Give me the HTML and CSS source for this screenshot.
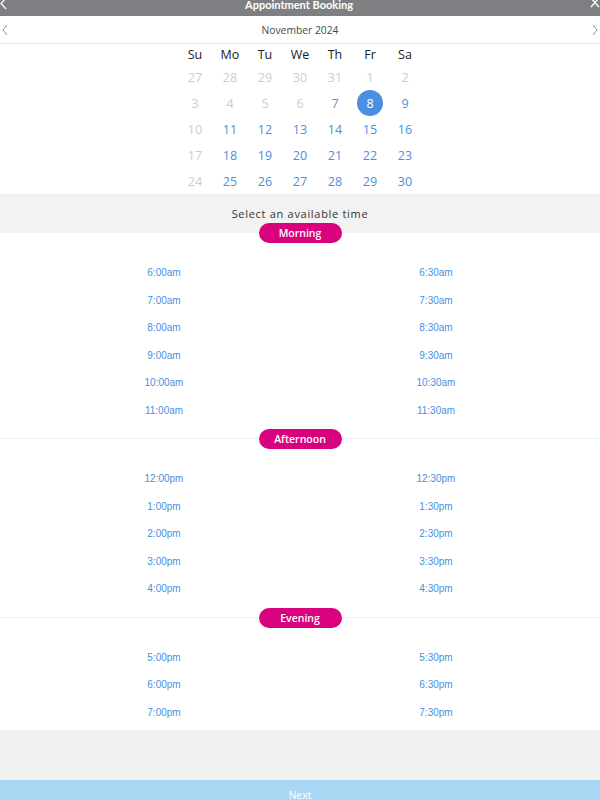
FILE: index.html
```html
<!DOCTYPE html>
<html>
<head>
<meta charset="utf-8">
<link rel="stylesheet" href="styles.css">
</head>
<body>
<div class="page">
  <header class="topbar">
    <svg class="tb-back" width="8" height="10" viewBox="0 0 8 10"><path d="M6 -2 L1 3.5 L6 9" fill="none" stroke="#fff" stroke-width="1.2"/></svg>
    <div class="tb-title">Appointment Booking</div>
    <svg class="tb-close" width="10" height="10" viewBox="0 0 10 10"><path d="M1 -2 L9 7 M9 -2 L1 7" fill="none" stroke="#fff" stroke-width="1.3"/></svg>
  </header>

  <div class="monthbar">
    <svg class="chev" width="8" height="12" viewBox="0 0 8 12"><path d="M6 1 L2 6 L6 11" fill="none" stroke="#8a8f99" stroke-width="1"/></svg>
    <div class="month">November 2024</div>
    <svg class="chev" width="8" height="12" viewBox="0 0 8 12"><path d="M2 1 L6 6 L2 11" fill="none" stroke="#8a8f99" stroke-width="1"/></svg>
  </div>

  <div class="calendar">
    <div class="dow">Su</div><div class="dow">Mo</div><div class="dow">Tu</div><div class="dow">We</div><div class="dow">Th</div><div class="dow">Fr</div><div class="dow">Sa</div>
    <div class="day off">27</div><div class="day off">28</div><div class="day off">29</div><div class="day off">30</div><div class="day off">31</div><div class="day off">1</div><div class="day off">2</div>
    <div class="day off">3</div><div class="day off">4</div><div class="day off">5</div><div class="day off">6</div><div class="day">7</div><div class="day"><span class="sel">8</span></div><div class="day">9</div>
    <div class="day off">10</div><div class="day">11</div><div class="day">12</div><div class="day">13</div><div class="day">14</div><div class="day">15</div><div class="day">16</div>
    <div class="day off">17</div><div class="day">18</div><div class="day">19</div><div class="day">20</div><div class="day">21</div><div class="day">22</div><div class="day">23</div>
    <div class="day off">24</div><div class="day">25</div><div class="day">26</div><div class="day">27</div><div class="day">28</div><div class="day">29</div><div class="day">30</div>
  </div>

  <div class="band">Select an available time</div>

  <div class="section-head first"><span class="pill">Morning</span></div>
  <div class="slots">
    <div class="slot">6:00am</div><div class="slot">6:30am</div>
    <div class="slot">7:00am</div><div class="slot">7:30am</div>
    <div class="slot">8:00am</div><div class="slot">8:30am</div>
    <div class="slot">9:00am</div><div class="slot">9:30am</div>
    <div class="slot">10:00am</div><div class="slot">10:30am</div>
    <div class="slot">11:00am</div><div class="slot">11:30am</div>
  </div>

  <div class="section-head"><span class="pill">Afternoon</span></div>
  <div class="slots">
    <div class="slot">12:00pm</div><div class="slot">12:30pm</div>
    <div class="slot">1:00pm</div><div class="slot">1:30pm</div>
    <div class="slot">2:00pm</div><div class="slot">2:30pm</div>
    <div class="slot">3:00pm</div><div class="slot">3:30pm</div>
    <div class="slot">4:00pm</div><div class="slot">4:30pm</div>
  </div>

  <div class="section-head"><span class="pill">Evening</span></div>
  <div class="slots last">
    <div class="slot">5:00pm</div><div class="slot">5:30pm</div>
    <div class="slot">6:00pm</div><div class="slot">6:30pm</div>
    <div class="slot">7:00pm</div><div class="slot">7:30pm</div>
  </div>

  <div class="filler"></div>
  <button class="next">Next</button>
</div>
</body>
</html>
```
FILE: styles.css
```css
html, body {
  margin: 0;
  padding: 0;
  overflow: hidden;
  background: #fff;
}
.page {
  width: 600px;
  height: 800px;
  display: flex;
  flex-direction: column;
  font-family: "Open Sans", "Liberation Sans", sans-serif;
  overflow: hidden;
}
.topbar {
  flex: 0 0 16px;
  height: 16px;
  background: #7e7f83;
  display: flex;
  align-items: flex-start;
  justify-content: space-between;
  overflow: hidden;
}
.tb-title {
  color: #fff;
  font-family: Lato, "Open Sans", sans-serif;
  font-weight: 700;
  font-size: 11px;
  line-height: 9px;
}
.monthbar {
  flex: 0 0 27px;
  height: 27px;
  border-bottom: 1px solid #e8e8e8;
  display: flex;
  align-items: center;
  justify-content: space-between;
  padding: 0 1px;
}
.month {
  font-size: 10.3px;
  color: #4a4a4a;
}
.calendar {
  align-self: center;
  display: grid;
  grid-template-columns: repeat(7, 35px);
  grid-template-rows: 19px repeat(5, 26px);
  padding-top: 1px;
}
.dow, .day {
  display: flex;
  align-items: center;
  justify-content: center;
  font-size: 12.5px;
}
.dow { color: #222; }
.day { color: #4a8fe2; }
.day.off { color: #c9cdd0; }
.sel {
  width: 26px;
  height: 26px;
  border-radius: 50%;
  background: #4a8fe2;
  color: #fff;
  display: flex;
  align-items: center;
  justify-content: center;
}
.band {
  flex: 0 0 39px;
  height: 39px;
  background: #f2f2f2;
  display: flex;
  align-items: center;
  justify-content: center;
  font-size: 11px;
  letter-spacing: 0.7px;
  color: #333;
}
.section-head {
  flex: 0 0 20px;
  height: 20px;
  display: flex;
  justify-content: center;
  background: linear-gradient(to bottom, transparent 9.5px, #eef1f1 9.5px, #eef1f1 10.5px, transparent 10.5px);
}
.section-head.first {
  margin-top: -10px;
  background: none;
}
.pill {
  width: 83px;
  height: 20px;
  border-radius: 10px;
  background: #d9027e;
  color: #fff;
  font-size: 10.5px;
  font-weight: 600;
  display: flex;
  align-items: center;
  justify-content: center;
}
.slots {
  display: grid;
  grid-template-columns: 1fr 1fr;
  grid-auto-rows: 27.5px;
  padding: 16px 28px 5px;
}
.slots.last { padding-bottom: 4px; }
.slot {
  display: flex;
  align-items: center;
  justify-content: center;
  font-family: "Liberation Sans", Arial, sans-serif;
  font-size: 10px;
  color: #4a8fe2;
}
.filler {
  flex: 1 1 auto;
  background: #f1f1f1;
}
.next {
  flex: 0 0 20px;
  height: 20px;
  border: 0;
  margin: 0;
  padding: 0;
  background: #a8d6f3;
  color: #fff;
  font-family: "Open Sans", sans-serif;
  font-size: 10.5px;
  line-height: 30px;
  display: block;
  width: 100%;
  text-align: center;
  overflow: hidden;
}
```
